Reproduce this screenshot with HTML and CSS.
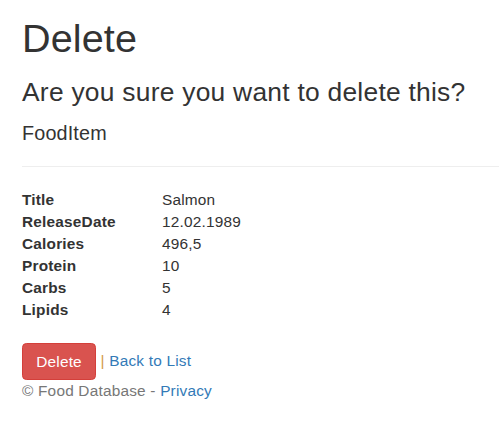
FILE: index.html
```html
<!DOCTYPE html>
<html lang="en">
<head>
<meta charset="utf-8">
<title>Delete</title>
<link rel="stylesheet" href="styles.css">
</head>
<body>
<div class="container">
  <h1 class="title">Delete</h1>
  <h3 class="question">Are you sure you want to delete this?</h3>
  <div class="details">
    <h4 class="entity">FoodItem</h4>
    <hr class="divider">
    <dl class="fields">
      <dt>Title</dt><dd>Salmon</dd>
      <dt>ReleaseDate</dt><dd>12.02.1989</dd>
      <dt>Calories</dt><dd>496,5</dd>
      <dt>Protein</dt><dd>10</dd>
      <dt>Carbs</dt><dd>5</dd>
      <dt>Lipids</dt><dd>4</dd>
    </dl>
    <form class="actions">
      <button type="button" class="btn-danger">Delete</button> <span class="sep">|</span> <a href="#" class="link">Back to List</a>
    </form>
  </div>
  <footer class="footer">
    <p class="footer-text">© Food Database - <a href="#" class="link">Privacy</a></p>
  </footer>
</div>
</body>
</html>
```
FILE: styles.css
```css
html, body {
  margin: 0;
  padding: 0;
  background: #fff;
}
body {
  font-family: "Liberation Sans", Arial, Helvetica, sans-serif;
  font-size: 15.4px;
  line-height: 22px;
  letter-spacing: 0.2px;
  color: #333;
}
.container {
  padding: 0 0 0 22px;
}
.title {
  margin: 16px 0 0;
  font-size: 39.6px;
  line-height: 44px;
  font-weight: 400;
  letter-spacing: 0.1px;
}
.question {
  margin: 18px 0 0;
  font-size: 26.4px;
  line-height: 29px;
  font-weight: 400;
  letter-spacing: 0.25px;
}
.entity {
  margin: 15px 0 0;
  font-size: 19.8px;
  line-height: 22px;
  font-weight: 400;
  letter-spacing: 0.15px;
}
.divider {
  margin: 22px 0 0;
  border: 0;
  border-top: 1px solid #eee;
  height: 0;
}
.fields {
  margin: 22px 0 0;
  display: grid;
  grid-template-columns: 140px 1fr;
}
.fields dt {
  font-weight: 700;
}
.fields dd {
  margin: 0;
}
.actions {
  margin: 22px 0 0;
  height: 37.4px;
  line-height: 22px;
}
.btn-danger {
  display: inline-block;
  font-family: inherit;
  font-size: 15.4px;
  line-height: 22px;
  letter-spacing: 0.2px;
  padding: 6.6px 13.2px;
  border: 1.1px solid #d43f3a;
  border-radius: 4.4px;
  background: #d9534f;
  color: #fff;
  vertical-align: middle;
  cursor: pointer;
}
.sep {
  color: #d39a45;
}
.link {
  color: #337ab7;
  text-decoration: none;
}
.footer-text {
  margin: 0;
  color: #777;
}
```
